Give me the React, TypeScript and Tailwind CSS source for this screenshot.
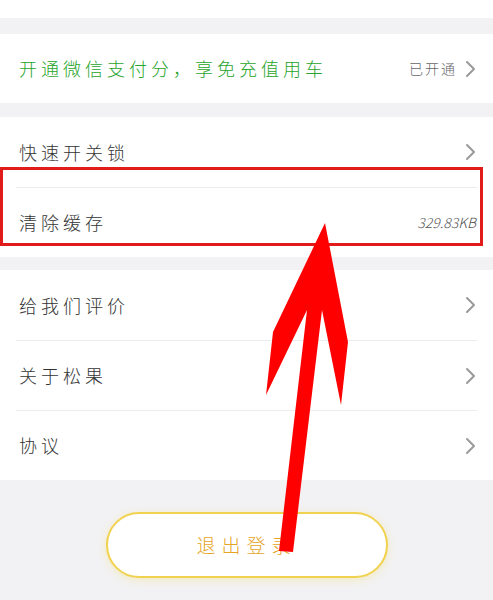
import { ReactNode } from "react";

const font = { fontFamily: '"Noto Sans CJK SC", "Noto Sans", sans-serif' };

function Chevron() {
  return (
    <svg width="11" height="18" viewBox="0 0 11 18" className="shrink-0">
      <path d="M2 2 L9 9 L2 16" fill="none" stroke="#9a9a9a" strokeWidth="2" strokeLinecap="round" strokeLinejoin="round" />
    </svg>
  );
}

function Row({
  label,
  right,
  chevron = true,
  divider = false,
  green = false,
  h = "h-[70px]",
}: {
  label: string;
  right?: ReactNode;
  chevron?: boolean;
  divider?: boolean;
  green?: boolean;
  h?: string;
}) {
  return (
    <div className={`mx-[16px] flex items-center justify-between ${h} ${divider ? "border-t border-[#ececee]" : ""}`}>
      <span
        className={`pl-[3px] text-[18px] tracking-[4px] font-light ${green ? "text-[#27a42a]" : "text-[#333]"}`}
      >
        {label}
      </span>
      <div className="flex items-center gap-[8px] pr-[1px]">
        {right}
        {chevron && <Chevron />}
      </div>
    </div>
  );
}

export default function App() {
  return (
    <div className="relative w-[493px] h-[600px] overflow-hidden bg-[#f2f2f4]" style={font}>
      <div className="h-[18px] bg-white" />

      <div className="mt-[16px] bg-white">
        <Row
          label="开通微信支付分，享免充值用车"
          green
          h="h-[69px]"
          right={<span className="text-[14px] tracking-[2px] text-[#666] font-light">已开通</span>}
        />
      </div>

      <div className="mt-[14px] bg-white">
        <Row label="快速开关锁" />
        <Row
          label="清除缓存"
          divider
          chevron={false}
          right={<span className="text-[14px] italic text-[#555] font-light">329.83KB</span>}
        />
      </div>

      <div className="mt-[13px] bg-white">
        <Row label="给我们评价" />
        <Row label="关于松果" divider />
        <Row label="协议" divider />
      </div>

      <div className="mt-[32px] flex justify-center">
        <button className="w-[282px] h-[66px] rounded-full border-2 border-[#f1d24e] bg-white text-[19px] tracking-[6px] text-[#e6a324] font-light shadow-[0_2px_8px_rgba(250,220,90,0.35)]">
          退出登录
        </button>
      </div>

      <div className="absolute left-0 top-[167px] w-[483px] h-[79px] border-[3px] border-[#e11a1a]" />

      <svg className="absolute inset-0 pointer-events-none" width="493" height="600" viewBox="0 0 493 600">
        <polygon
          points="325,223 348,342 341,405 322,310 293,552 279,551 307,310 266,395 273,332"
          fill="#ff0000"
        />
      </svg>
    </div>
  );
}
